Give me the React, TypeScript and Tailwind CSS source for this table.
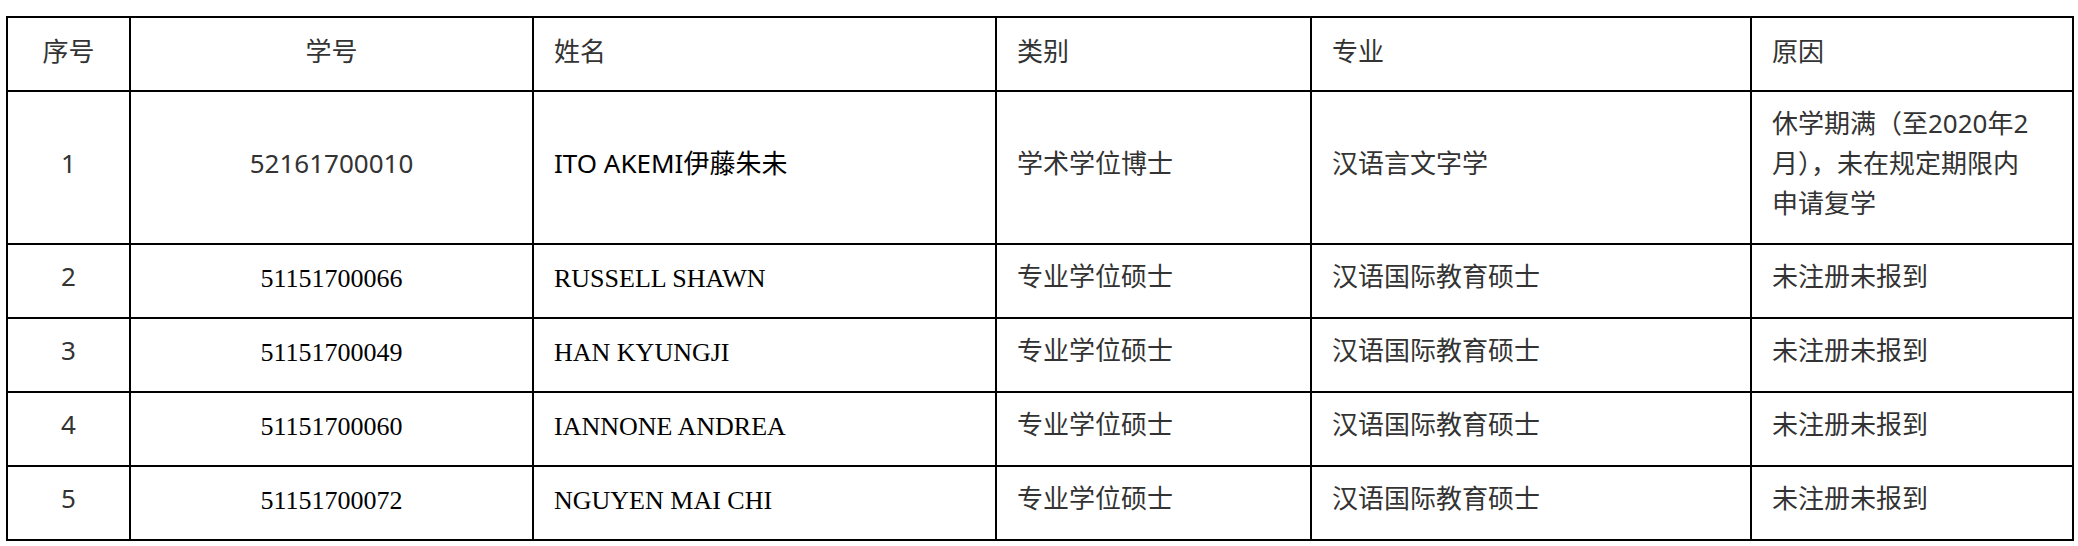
import React from 'react'

interface Student {
  no: string
  id: string
  name: string
  type: string
  major: string
  reason: string[]
  serif: boolean
}

const students: Student[] = [
  {
    no: '1',
    id: '52161700010',
    name: 'ITO AKEMI伊藤朱未',
    type: '学术学位博士',
    major: '汉语言文字学',
    reason: ['休学期满（至2020年2', '月），未在规定期限内', '申请复学'],
    serif: false,
  },
  { no: '2', id: '51151700066', name: 'RUSSELL SHAWN', type: '专业学位硕士', major: '汉语国际教育硕士', reason: ['未注册未报到'], serif: true },
  { no: '3', id: '51151700049', name: 'HAN KYUNGJI', type: '专业学位硕士', major: '汉语国际教育硕士', reason: ['未注册未报到'], serif: true },
  { no: '4', id: '51151700060', name: 'IANNONE ANDREA', type: '专业学位硕士', major: '汉语国际教育硕士', reason: ['未注册未报到'], serif: true },
  { no: '5', id: '51151700072', name: 'NGUYEN MAI CHI', type: '专业学位硕士', major: '汉语国际教育硕士', reason: ['未注册未报到'], serif: true },
]

const cell = 'flex items-center border-r-2 border-b-2 border-black px-5 leading-[40px]'
const sans = "font-['Noto_Sans','Noto_Sans_CJK_SC',sans-serif] text-[#333] pb-[10px]"
const serif = "font-['Liberation_Serif','Noto_Sans_CJK_SC',serif] text-black pb-[4px]"
const head = "font-['Noto_Sans','Noto_Sans_CJK_SC',sans-serif] text-[#333] pb-[7px]"

export default function App() {
  return (
    <div className="min-h-screen bg-white pt-[16px] pl-[6px]">
      <div className="grid w-[2068px] grid-cols-[123px_403px_463px_315px_440px_322px] grid-rows-[74px_153px_74px_74px_74px_74px] border-l-2 border-t-2 border-black text-[26px]">
        <div className={`${cell} ${head} justify-center`}>序号</div>
        <div className={`${cell} ${head} justify-center`}>学号</div>
        <div className={`${cell} ${head}`}>姓名</div>
        <div className={`${cell} ${head}`}>类别</div>
        <div className={`${cell} ${head}`}>专业</div>
        <div className={`${cell} ${head}`}>原因</div>

        {students.map((s) => (
          <React.Fragment key={s.no}>
            <div className={`${cell} ${sans} justify-center`}>{s.no}</div>
            <div className={`${cell} ${s.serif ? serif : sans} justify-center`}>{s.id}</div>
            <div className={`${cell} ${s.serif ? serif : sans + ' !text-black'}`}>{s.name}</div>
            <div className={`${cell} ${sans}`}>{s.type}</div>
            <div className={`${cell} ${sans}`}>{s.major}</div>
            <div className={`${cell} ${sans}`}>
              <div>
                {s.reason.map((line, i) => (
                  <div key={i}>{line}</div>
                ))}
              </div>
            </div>
          </React.Fragment>
        ))}
      </div>
    </div>
  )
}
